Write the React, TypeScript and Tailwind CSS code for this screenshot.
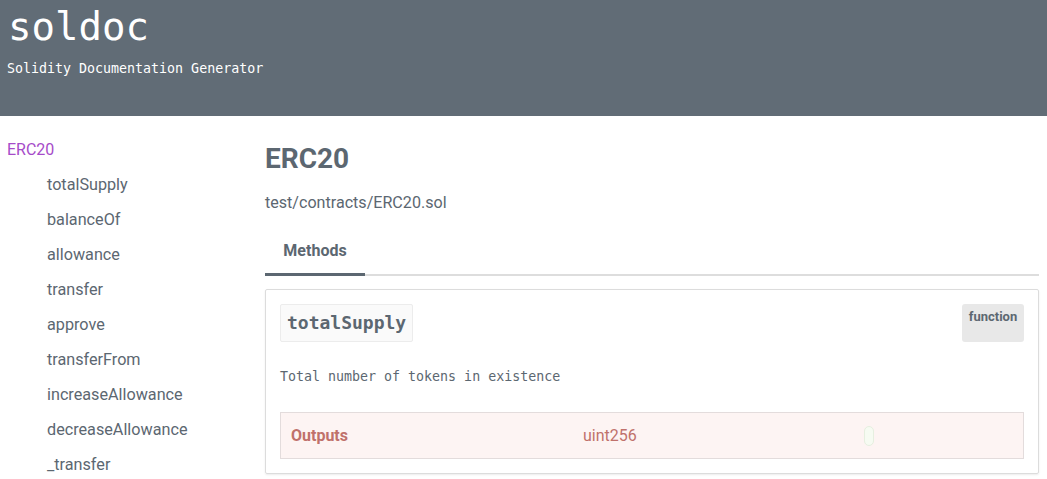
const methods = [
  "totalSupply",
  "balanceOf",
  "allowance",
  "transfer",
  "approve",
  "transferFrom",
  "increaseAllowance",
  "decreaseAllowance",
  "_transfer",
];

const mono = "font-['DejaVu_Sans_Mono',monospace]";

export default function App() {
  return (
    <div className="min-h-screen bg-white font-['Roboto',sans-serif] text-[#5c6771]">
      <header className={`h-[116px] bg-[#616c76] px-[7px] pt-[4px] text-white ${mono}`}>
        <h1 className="text-[39px] leading-[46px] pl-[1px]">soldoc</h1>
        <p className="mt-[11px] text-[13.3px] leading-[16px]">Solidity Documentation Generator</p>
      </header>

      <div className="flex">
        <nav className="w-[265px] shrink-0 pl-[7px] pt-[22px]">
          <a className="block text-[16px] leading-[24px] text-[#a64bc9]">ERC20</a>
          <ul className="mt-[11px] flex flex-col gap-[11px] pl-[40px]">
            {methods.map((m) => (
              <li key={m} className="text-[16.2px] leading-[24px]">
                {m}
              </li>
            ))}
          </ul>
        </nav>

        <main className="mr-[8px] flex-1 pt-[26px]">
          <h2 className="text-[28px] font-bold leading-[34px]">ERC20</h2>
          <p className="mt-[17px] text-[16.1px] leading-[20px]">test/contracts/ERC20.sol</p>

          <div className="mt-[20px] flex border-b-2 border-[#dddddd]">
            <div className="-mb-[2px] w-[100px] border-b-[3px] border-[#5c6771] pb-[10px] pt-[6px] text-center text-[16px] font-bold leading-[24px]">
              Methods
            </div>
          </div>

          <section className="mt-[13px] rounded-[2px] border border-[#dcdcdc] px-[14px] pb-[14px] pt-[14px] shadow-[0_1px_2px_rgba(0,0,0,0.08)]">
            <div className="flex items-start justify-between">
              <code
                className={`rounded-[2px] border border-[#ececec] bg-[#fafafa] px-[6px] py-[6px] text-[18px] font-bold leading-[24px] ${mono}`}
              >
                totalSupply
              </code>
              <span className="h-[38px] w-[62px] rounded-[3px] bg-[#e8e8e8] pt-[5px] text-center text-[13px] font-bold leading-[16px]">
                function
              </span>
            </div>

            <p className={`mt-[26px] text-[13.3px] leading-[18px] ${mono}`}>Total number of tokens in existence</p>

            <div className="mt-[26px] flex h-[47px] items-center border border-[#e3dcdc] bg-[#fdf4f3] text-[#c0716b]">
              <span className="w-[302px] pl-[10px] text-[16px] font-bold">Outputs</span>
              <span className="w-[281px] text-[16px]">uint256</span>
              <span className="h-[20px] w-[10px] rounded-[5px] border border-[#e6efe0] bg-[#f6fbf2]" />
            </div>
          </section>
        </main>
      </div>
    </div>
  );
}
